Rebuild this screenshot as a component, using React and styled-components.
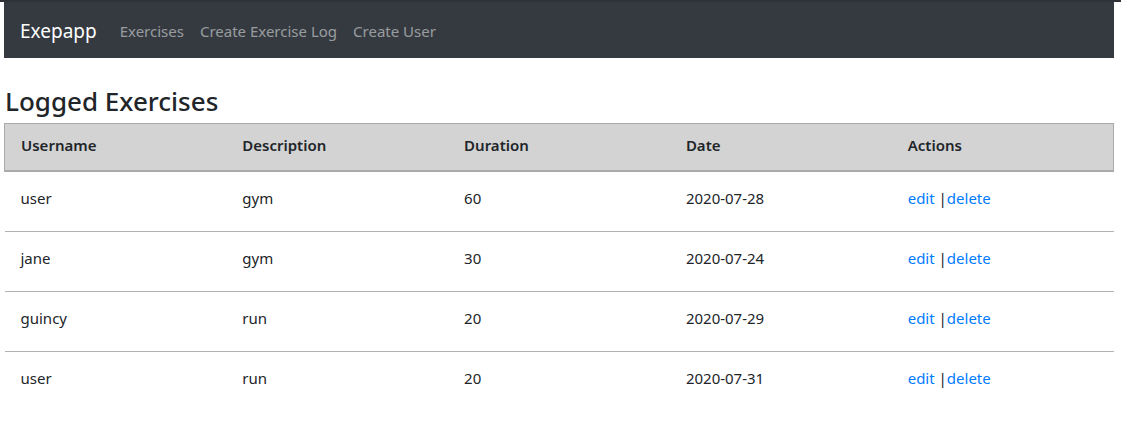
import React from 'react';
import styled, { createGlobalStyle } from 'styled-components';

const GlobalStyle = createGlobalStyle`
    body {
        margin: 0;
        border-top: 2px solid #2e3236;
        font-family: "Noto Sans", "Open Sans", sans-serif;
        font-size: 15px;
        line-height: 24px;
        color: #212529;
        background: #fff;
    }
`;

const Container = styled.div`
    width: 1110px;
    margin-left: 4px;
`;

const Navbar = styled.nav`
    display: flex;
    align-items: center;
    height: 56px;
    padding: 2px 16px 0;
    background: #343a40;
    box-sizing: border-box;
`;

const Brand = styled.a`
    font-size: 19px;
    color: #fff;
    margin-right: 15px;
    text-decoration: none;
`;

const NavLink = styled.a`
    color: rgba(255, 255, 255, 0.5);
    padding: 0 8px;
    text-decoration: none;
`;

const Title = styled.h3`
    font-size: 26px;
    font-weight: 500;
    line-height: 32px;
    margin: 27px 0 6px 1px;
`;

const Table = styled.table`
    width: 100%;
    border-collapse: collapse;
    table-layout: fixed;
`;

const Th = styled.th`
    text-align: left;
    font-weight: 600;
    padding: 9px 16px 13px;
    background: #d3d3d3;
    border: 1px solid #aaa;
    border-bottom-width: 2px;
    border-left: none;
    border-right: none;
    &:first-child { border-left: 1px solid #aaa; }
    &:last-child { border-right: 1px solid #aaa; }
`;

const Td = styled.td`
    padding: 14px 16px 21px;
    border-bottom: ${p => (p.last ? 'none' : '1px solid #b3b3b3')};
`;

const Link = styled.a`
    color: #007bff;
    text-decoration: none;
`;

const exercises = [
    { username: 'user', description: 'gym', duration: 60, date: '2020-07-28' },
    { username: 'jane', description: 'gym', duration: 30, date: '2020-07-24' },
    { username: 'guincy', description: 'run', duration: 20, date: '2020-07-29' },
    { username: 'user', description: 'run', duration: 20, date: '2020-07-31' },
];

export default function App() {
    return (
        <>
            <GlobalStyle />
            <Container>
                <Navbar>
                    <Brand href="#">Exepapp</Brand>
                    <NavLink href="#">Exercises</NavLink>
                    <NavLink href="#">Create Exercise Log</NavLink>
                    <NavLink href="#">Create User</NavLink>
                </Navbar>
                <Title>Logged Exercises</Title>
                <Table>
                    <thead>
                        <tr>
                            <Th>Username</Th>
                            <Th>Description</Th>
                            <Th>Duration</Th>
                            <Th>Date</Th>
                            <Th>Actions</Th>
                        </tr>
                    </thead>
                    <tbody>
                        {exercises.map((ex, i) => {
                            const last = i === exercises.length - 1;
                            return (
                                <tr key={i}>
                                    <Td last={last}>{ex.username}</Td>
                                    <Td last={last}>{ex.description}</Td>
                                    <Td last={last}>{ex.duration}</Td>
                                    <Td last={last}>{ex.date}</Td>
                                    <Td last={last}>
                                        <Link href="#">edit</Link> |<Link href="#">delete</Link>
                                    </Td>
                                </tr>
                            );
                        })}
                    </tbody>
                </Table>
            </Container>
        </>
    );
}
